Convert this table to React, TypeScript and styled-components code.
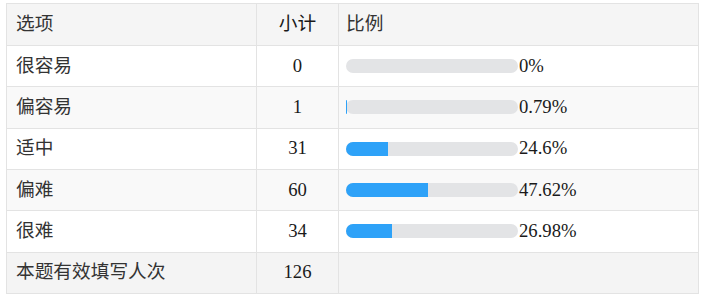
import React from "react";
import styled, { createGlobalStyle } from "styled-components";

const Global = createGlobalStyle`
  html, body { margin: 0; padding: 0; background: #ffffff; }
  body {
    font-family: "Liberation Serif", "Noto Sans CJK SC", serif;
  }
`;

const Wrap = styled.div`
  padding: 3px 8px 0 6px;
`;

const Table = styled.table`
  width: 693px;
  border-collapse: collapse;
  table-layout: fixed;
  font-size: 18.7px;
  color: #333333;
  border: 1px solid #e3e3e3;
`;

const Row = styled.tr<{ $bg: string }>`
  background: ${(p) => p.$bg};
  height: 41.33px;
`;

const Cell = styled.td<{ $align?: string }>`
  border: 1px solid #e3e3e3;
  padding: 0 0 0 9px;
  text-align: ${(p) => p.$align || "left"};
  vertical-align: middle;
  white-space: nowrap;
  line-height: 1;
`;

const NumCell = styled(Cell)`
  padding: 0;
  color: #1a1a1a;
`;

const BarCell = styled(Cell)`
  padding-left: 7px;
`;

const BarWrap = styled.div`
  display: flex;
  align-items: center;
`;

const Track = styled.div`
  width: 172px;
  height: 14px;
  border-radius: 7px;
  background: #e3e4e6;
  flex: none;
`;

const Fill = styled.div`
  height: 100%;
  background: #2ea2f8;
  border-radius: 7px 0 0 7px;
`;

const Pct = styled.span`
  color: #1a1a1a;
  margin-left: 1px;
`;

const data = [
  { name: "很容易", n: 0, p: 0, label: "0%" },
  { name: "偏容易", n: 1, p: 0.79, label: "0.79%" },
  { name: "适中", n: 31, p: 24.6, label: "24.6%" },
  { name: "偏难", n: 60, p: 47.62, label: "47.62%" },
  { name: "很难", n: 34, p: 26.98, label: "26.98%" },
];

export default function App() {
  return (
    <>
      <Global />
      <Wrap>
        <Table>
          <colgroup>
            <col style={{ width: 250 }} />
            <col style={{ width: 82 }} />
            <col />
          </colgroup>
          <thead>
            <Row $bg="#f5f5f5" style={{ height: 42 }}>
              <Cell>选项</Cell>
              <NumCell $align="center">小计</NumCell>
              <BarCell>比例</BarCell>
            </Row>
          </thead>
          <tbody>
            {data.map((d, i) => (
              <Row key={d.name} $bg={i % 2 === 1 ? "#f9f9f9" : "#ffffff"}>
                <Cell>{d.name}</Cell>
                <NumCell $align="center">{d.n}</NumCell>
                <BarCell>
                  <BarWrap>
                    <Track>
                      <Fill style={{ width: `${d.p}%` }} />
                    </Track>
                    <Pct>{d.label}</Pct>
                  </BarWrap>
                </BarCell>
              </Row>
            ))}
            <Row $bg="#f4f4f4">
              <Cell>本题有效填写人次</Cell>
              <NumCell $align="center">126</NumCell>
              <BarCell />
            </Row>
          </tbody>
        </Table>
      </Wrap>
    </>
  );
}
